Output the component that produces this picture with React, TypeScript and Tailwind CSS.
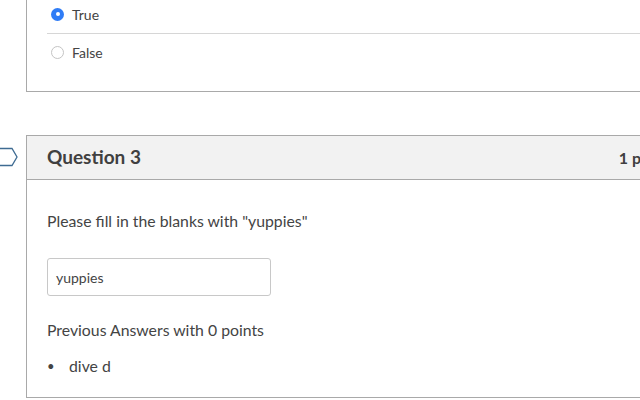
import React from 'react';

const Radio = ({ checked }: { checked: boolean }) =>
  checked ? (
    <span className="ml-1 mr-2 flex h-[13px] w-[13px] items-center justify-center rounded-full bg-[#2f7cf6]">
      <span className="h-[4px] w-[4px] rounded-full bg-white" />
    </span>
  ) : (
    <span className="ml-1 mr-2 h-[13px] w-[13px] rounded-full border border-[#c4c4c4] bg-white" />
  );

const App: React.FC = () => {
  return (
    <div
      className="relative h-[400px] w-[640px] overflow-hidden bg-white text-[#444]"
      style={{ fontFamily: 'Lato, "Open Sans", sans-serif' }}
    >
      {/* previous question, cut off at the top */}
      <div className="-mt-[5px] ml-[26px] w-[649px] border-x border-b border-[#a9a9a9] px-5 pb-5">
        <div className="flex h-[38px] items-center text-[14px]">
          <Radio checked />
          <span>True</span>
        </div>
        <div className="flex h-[38px] items-center border-t border-[#d6d6d6] text-[14px]">
          <Radio checked={false} />
          <span>False</span>
        </div>
      </div>

      {/* question 3 */}
      <div className="relative mt-[43px]">
        <svg className="absolute left-0 top-[12px]" width="20" height="20" viewBox="0 0 20 20">
          <path d="M-2 1.5 H12 L17 10 L12 18.5 H-2" fill="none" stroke="#3e6b92" strokeWidth="1.3" />
        </svg>
        <div className="ml-[26px] w-[649px] border border-[#a9a9a9]">
          <div className="flex h-[44px] items-center justify-between border-b border-[#a9a9a9] bg-[#f2f2f2] px-5">
            <span className="text-[19px] font-bold text-[#404040]">Question 3</span>
            <span className="text-[16px] font-bold text-[#404040]">1 pts</span>
          </div>
          <div className="px-5 pb-[20px] pt-[30px] text-[15.8px]">
            <p className="leading-[22px]">Please fill in the blanks with "yuppies"</p>
            <div className="mt-[26px] flex h-[38px] w-[224px] items-center rounded-[3px] border border-[#c8c8c8] px-2 text-[14px]">
              yuppies
            </div>
            <p className="mt-[23px] leading-[22px]">Previous Answers with 0 points</p>
            <div className="mt-[14px] flex items-center leading-[22px]">
              <span className="w-[22px] text-[13px]">•</span>
              <span>dive d</span>
            </div>
          </div>
        </div>
      </div>
    </div>
  );
};

export default App;
